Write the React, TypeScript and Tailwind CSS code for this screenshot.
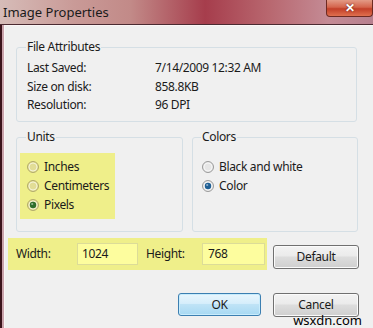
const ui = "font-['Noto_Sans',sans-serif] text-[12px] tracking-[-0.35px] text-[#1b1b1b]"

function Radio({ checked, tone }: { checked?: boolean; tone: 'yellow' | 'plain' }) {
  const ring = tone === 'yellow' ? '#b3ab6c' : '#9a9a9a'
  const fill = tone === 'yellow' ? '#e2dd96' : '#e6e6e6'
  const dot = tone === 'yellow' ? '#2f6f2c' : '#1f5f94'
  return (
    <svg width="12" height="12" viewBox="0 0 12 12" className="shrink-0">
      <circle cx="6" cy="6" r="5.5" fill={fill} stroke={ring} />
      <circle cx="6" cy="6" r="4" fill="none" stroke="#ffffff" strokeOpacity="0.6" />
      {checked && (
        <>
          <circle cx="6" cy="6" r="3.2" fill={dot} />
          <circle cx="5.2" cy="5" r="1.1" fill="#ffffff" fillOpacity="0.5" />
        </>
      )}
    </svg>
  )
}

function RadioRow({ label, checked, tone }: { label: string; checked?: boolean; tone: 'yellow' | 'plain' }) {
  return (
    <div className="flex h-[19px] items-center gap-[5px]">
      <Radio checked={checked} tone={tone} />
      <span>{label}</span>
    </div>
  )
}

function Button({ label, primary }: { label: string; primary?: boolean }) {
  return (
    <div
      className={
        primary
          ? 'flex h-[23px] w-[83px] items-center justify-center rounded-[3px] border border-[#3c7fb1] bg-[linear-gradient(180deg,#e9f6fd_0%,#d6eefb_45%,#bfe3f6_50%,#a7d9f3_100%)] shadow-[inset_0_0_0_1px_#c8ecfc]'
          : 'flex h-[24px] w-[86px] items-center justify-center rounded-[3px] border border-[#707070] bg-[linear-gradient(180deg,#f3f3f3_0%,#ebebeb_45%,#dddddd_50%,#cfcfcf_100%)] shadow-[inset_0_0_0_1px_#fbfbfb]'
      }
    >
      {label}
    </div>
  )
}

export default function App() {
  return (
    <div className={`relative flex h-[328px] w-[373px] flex-col overflow-hidden ${ui}`}>
      {/* title bar */}
      <div className="flex h-[25px] shrink-0 items-start justify-between border-b border-[#4a2a31] bg-[linear-gradient(90deg,#d6bcb8_0%,#c99a97_20%,#c28a88_35%,#a63d4c_55%,#b8676f_72%,#c48b95_88%,#b7808f_100%)]">
        <span className="mt-[3px] pl-[3px] text-[13px] tracking-normal text-[#1a1a1a]">Image Properties</span>
        <div className="flex h-[17px] w-[47px] items-center justify-center rounded-b-[4px] border border-t-0 border-[#6e2a22] bg-[linear-gradient(180deg,#e39a86_0%,#d4644c_45%,#c23f28_55%,#e0704f_100%)] text-[12px] font-bold text-white [text-shadow:0_0_2px_#5a1a10]">
          ✕
        </div>
      </div>

      <div className="flex flex-1">
        <div className="w-[2px] bg-[#3b141b]" />
        <div className="w-[2px] bg-[#caa3ab]" />
        <div className="flex-1 border-l border-t border-[#fbf6f6] bg-[#f0f0f0] pl-[11px] pt-[14px]">
          {/* file attributes */}
          <fieldset className="h-[82px] w-[341px] rounded-[3px] border border-[#d5dfe5] pl-[10px]">
            <legend className="-ml-[1px] px-[1px] leading-[14px]">File Attributes</legend>
            <div className="grid grid-cols-[128px_1fr] pt-[5px] leading-[18.5px]">
              <span>Last Saved:</span>
              <span>7/14/2009 12:32 AM</span>
              <span>Size on disk:</span>
              <span>858.8KB</span>
              <span>Resolution:</span>
              <span>96 DPI</span>
            </div>
          </fieldset>

          {/* units / colors */}
          <div className="mt-[8px] flex gap-[9px]">
            <fieldset className="h-[102px] w-[167px] rounded-[3px] border border-[#d5dfe5]">
              <legend className="ml-[9px] px-[1px] leading-[14px]">Units</legend>
              <div className="ml-[3px] mt-[9px] h-[66px] w-[95px] bg-[#efef8a] pl-[7px] pt-[4px]">
                <RadioRow label="Inches" tone="yellow" />
                <RadioRow label="Centimeters" tone="yellow" />
                <RadioRow label="Pixels" tone="yellow" checked />
              </div>
            </fieldset>
            <fieldset className="h-[102px] w-[166px] rounded-[3px] border border-[#d5dfe5]">
              <legend className="ml-[8px] px-[1px] leading-[14px]">Colors</legend>
              <div className="mt-[13px] pl-[9px]">
                <RadioRow label="Black and white" tone="plain" />
                <RadioRow label="Color" tone="plain" checked />
              </div>
            </fieldset>
          </div>

          {/* size row */}
          <div className="mt-[6px] flex items-start pr-[14px]">
            <div className="-ml-[8px] flex h-[32px] w-[259px] items-center bg-[#efef8a] pl-[8px]">
              <span className="w-[61px]">Width:</span>
              <div className="flex h-[22px] w-[61px] items-center border border-[#dcdc98] bg-[#fdfd9e] pl-[4px]">1024</div>
              <span className="ml-[8px] w-[56px]">Height:</span>
              <div className="flex h-[22px] w-[63px] items-center border border-[#dcdc98] bg-[#fdfd9e] pl-[5px]">768</div>
            </div>
            <div className="ml-auto mt-[7px]">
              <Button label="Default" />
            </div>
          </div>

          {/* actions */}
          <div className="mt-[23px] flex justify-end gap-[12px] pr-[14px]">
            <Button label="OK" primary />
            <Button label="Cancel" />
          </div>
        </div>
      </div>

      <span className="absolute bottom-[1px] right-[11px] text-[13px] leading-[14px] tracking-normal text-black">wsxdn.com</span>
    </div>
  )
}
